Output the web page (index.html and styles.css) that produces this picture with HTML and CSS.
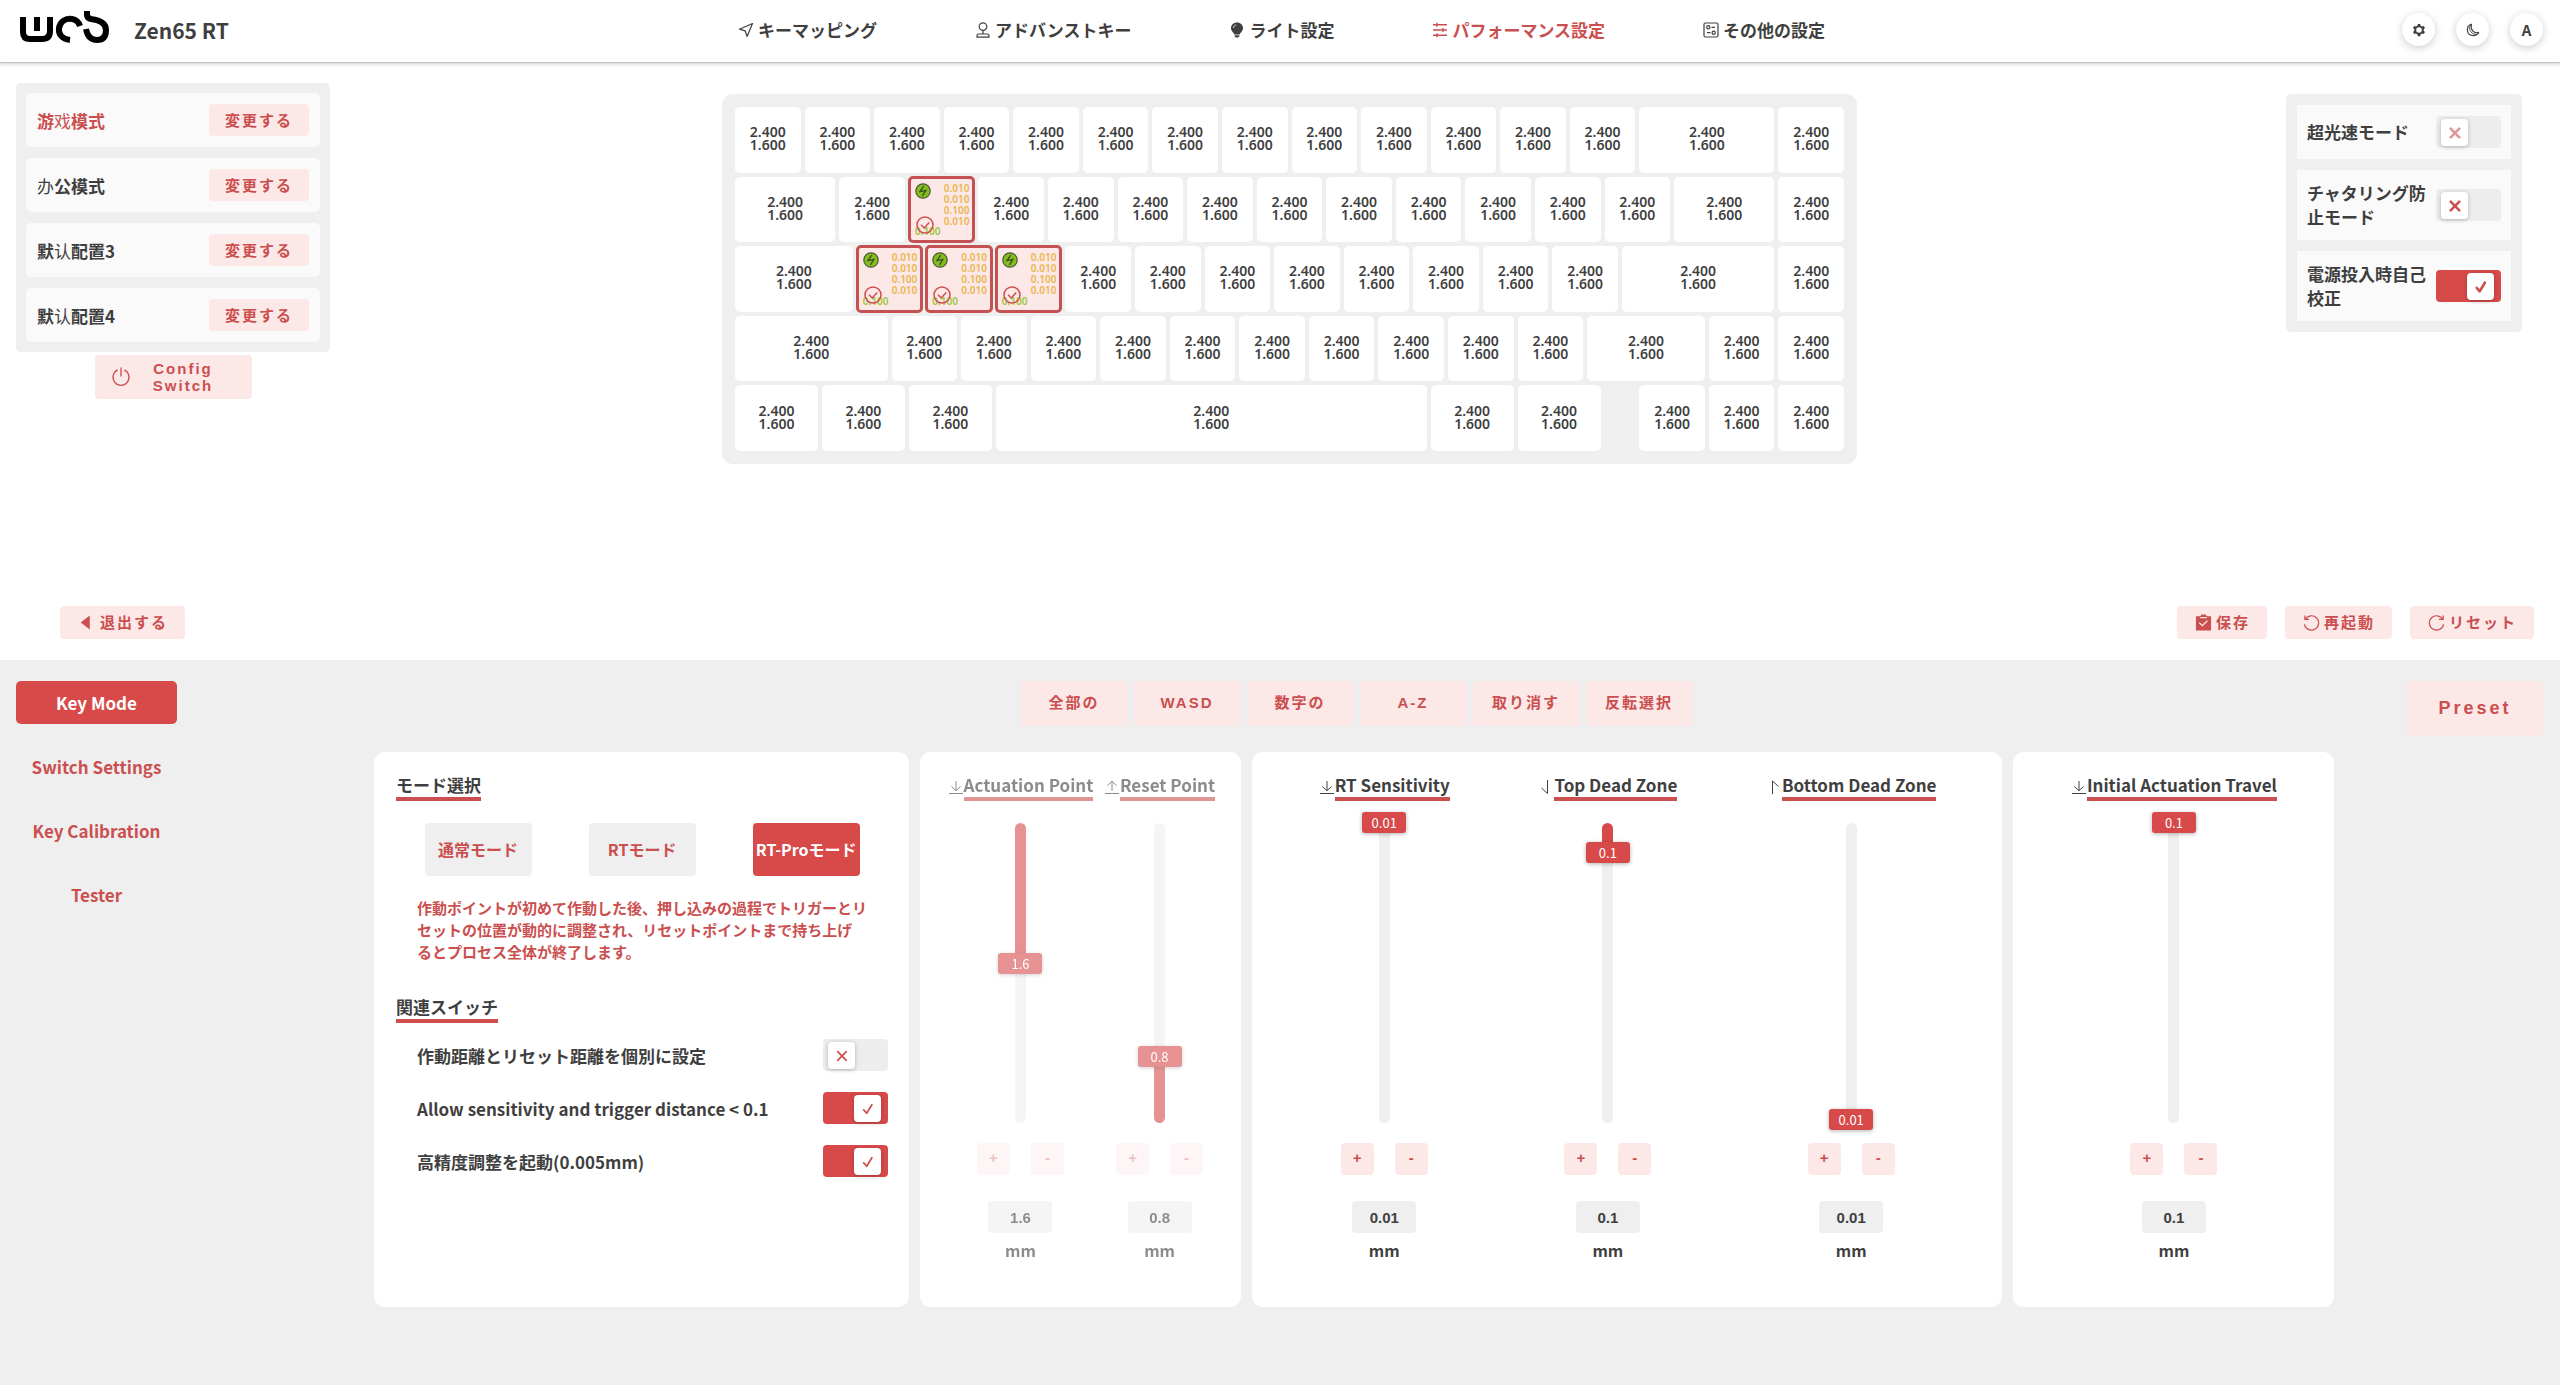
FILE: index.html
```html
<!DOCTYPE html>
<html lang="ja">
<head>
<meta charset="utf-8">
<meta name="viewport" content="width=device-width, initial-scale=1">
<title>Zen65 RT</title>
<link rel="stylesheet" href="styles.css">
</head>
<body>
<svg class="sprite" aria-hidden="true">
  <symbol id="i-location" viewBox="0 0 16 16"><path d="M14.5 1.5 1.5 7.2l5.6 1.6 2 5.7z" fill="none" stroke="currentColor" stroke-width="1.2" stroke-linejoin="round"/></symbol>
  <symbol id="i-stick" viewBox="0 0 16 16"><g fill="none" stroke="currentColor" stroke-width="1.2"><circle cx="8" cy="4.6" r="3.8"/><path d="M8 8.4V12M2 15.2v-1.6q0-1.6 1.6-1.6h8.8q1.6 0 1.6 1.6v1.6z"/></g></symbol>
  <symbol id="i-bulb" viewBox="0 0 16 16"><path d="M8 .5C4.400 .5 2 3 2 6.200c0 2.300 1.500 3.600 2.700 5.100l.5 1.200h5.600l.5-1.200C12.500 9.800 14 8.500 14 6.200 14 3 11.600.5 8 .5zM5.600 13.300h4.800v1L9.300 15.600H6.700l-1.100-1.300z" fill="currentColor"/><path d="M4.500 6c.1-1.700 1.200-2.900 2.800-3.100" fill="none" stroke="#fff" stroke-width=".8"/></symbol>
  <symbol id="i-tune" viewBox="0 0 16 16"><path d="M1 2.800h14M1 8h14M1 13.200h14M5 .8v4M11 6v4M5 11.200v4" fill="none" stroke="currentColor" stroke-width="1.400"/></symbol>
  <symbol id="i-form" viewBox="0 0 16 16"><g fill="none" stroke="currentColor" stroke-width="1.200"><rect x="1" y="1" width="14" height="14" rx="1.500"/><circle cx="5.300" cy="5.300" r="1.600"/><circle cx="10.700" cy="10.700" r="1.600"/><path d="M8.500 5.300H12M4 10.700h3.500"/></g></symbol>
  <symbol id="i-gear" viewBox="0 0 16 16"><path d="M6.700 1h2.600l.6 2 1.600.9 2-.5 1.300 2.300L13.400 7.200v1.600l1.400 1.500-1.300 2.300-2-.5-1.600.9-.6 2H6.700l-.6-2-1.600-.9-2 .5-1.300-2.300L2.600 8.800V7.200L1.200 5.700l1.300-2.300 2 .5L6.100 3zM8 4.800a3.200 3.200 0 1 0 0 6.400 3.200 3.200 0 0 0 0-6.400z" fill="currentColor" fill-rule="evenodd"/></symbol>
  <symbol id="i-moon" viewBox="0 0 16 16"><path d="M6.200 1.400C3 2.500 1.200 5.200 1.600 8.600c.5 3.500 3.300 6 6.800 5.900 2.700-.1 4.900-1.500 6.100-3.700-5.600 1.600-9.800-3.400-8.300-9.400z" fill="none" stroke="currentColor" stroke-width="1.400" stroke-linejoin="round"/><path d="M4.200 4c-.8 4.500 2 8.800 7 8.800" fill="none" stroke="currentColor" stroke-width="1"/></symbol>
  <symbol id="i-power" viewBox="0 0 20 20"><path d="M10 1v8M6.300 3.200a8 8 0 1 0 7.400 0" fill="none" stroke="currentColor" stroke-width="1.300" stroke-linecap="round"/></symbol>
  <symbol id="i-back" viewBox="0 0 16 16"><path d="M12 1.500v13L3.500 8z" fill="currentColor"/></symbol>
  <symbol id="i-save" viewBox="0 0 18 18"><path d="M1 2.500h4V1.800h1.500V.5h5v1.300H13v.7h4V17.500H1z" fill="currentColor"/><path d="M5.500 3.900h7M4.600 9.300l3.200 3 5.300-5.200" fill="none" stroke="#fde8e8" stroke-width="1.300"/></symbol>
  <symbol id="i-undo" viewBox="0 0 18 18"><path d="M2 1.500v4.300h4.300M2.400 5.600a7.600 7.600 0 1 1-.9 5.400" fill="none" stroke="currentColor" stroke-width="1.300"/></symbol>
  <symbol id="i-redo" viewBox="0 0 18 18"><path d="M16 1.500v4.300h-4.300M15.600 5.600a7.600 7.600 0 1 0 .9 5.400" fill="none" stroke="currentColor" stroke-width="1.300"/></symbol>
  <symbol id="i-close" viewBox="0 0 14 14"><path d="m2 2 10 10M12 2 2 12" fill="none" stroke="currentColor" stroke-linecap="round"/></symbol>
  <symbol id="i-check" viewBox="0 0 14 14"><path d="m2 8 3.500 4L11.500 2" fill="none" stroke="currentColor" stroke-linecap="round" stroke-linejoin="round"/></symbol>
  <symbol id="i-down" viewBox="0 0 16 16"><path d="M8 2v9.500M3.500 7.500 8 11.700l4.500-4.200M1 14.500h14" fill="none" stroke="currentColor"/></symbol>
  <symbol id="i-up" viewBox="0 0 16 16"><path d="M8 12V2.300M3.500 6.500 8 2.300l4.500 4.200M1 14.500h14" fill="none" stroke="currentColor"/></symbol>
  <symbol id="i-half-down" viewBox="0 0 16 16"><path d="M9.500 1v13.500L3.500 9" fill="none" stroke="currentColor"/></symbol>
  <symbol id="i-half-up" viewBox="0 0 16 16"><path d="M6.500 15V2l6 5.500" fill="none" stroke="currentColor"/></symbol>
  <symbol id="i-bolt" viewBox="0 0 16 16"><circle cx="8" cy="8" r="7.200" fill="#84bd1c" stroke="#4c5a34" stroke-width="1.200"/><path d="M8.800 3 5 8.600l5.800-1.200L7.400 13" fill="none" stroke="#3c4a2c" stroke-width="1.300"/></symbol>
  <symbol id="i-ok" viewBox="0 0 18 18"><g fill="none" stroke="currentColor" stroke-width="1.500"><circle cx="9" cy="9" r="8"/><path d="m5 8.800 3.200 3.200L13.200 6.500"/></g></symbol>
</svg>

<header class="topbar">
  <div class="brand">
    <svg class="logo" viewBox="0 0 90 32" role="img" aria-label="WOB"><g fill="none" stroke="#000" stroke-width="6"><path d="M3 6v15q0 7 7 7h12q8 0 8-8V6M17 6v14"/><path d="M50 29C42 28 38 23 39 17 40 11 45 7 52 8q6 1 8 7"/><path d="M67 0v4q0 3 4 4 15 2 15 11 0 10-9 10Q68 29 66 18"/></g></svg>
    <span class="product">Zen65 RT</span>
  </div>
  <nav class="mainnav">
    <a href="#"><svg><use href="#i-location"/></svg>キーマッピング</a>
    <a href="#"><svg><use href="#i-stick"/></svg>アドバンストキー</a>
    <a href="#"><svg><use href="#i-bulb"/></svg>ライト設定</a>
    <a href="#" class="current"><svg><use href="#i-tune"/></svg>パフォーマンス設定</a>
    <a href="#"><svg><use href="#i-form"/></svg>その他の設定</a>
  </nav>
  <div class="tools">
    <button class="round" aria-label="設定"><svg><use href="#i-gear"/></svg></button>
    <button class="round" aria-label="テーマ"><svg><use href="#i-moon"/></svg></button>
    <button class="round">A</button>
  </div>
</header>

<main>
  <section class="upper">
    <div class="stage">
      <div class="profiles">
        <ul class="panel">
          <li class="current"><span>游<i>戏</i>模式</span><button class="btn">変更する</button></li>
          <li><span><i>办</i>公模式</span><button class="btn">変更する</button></li>
          <li><span>默<i>认</i>配置3</span><button class="btn">変更する</button></li>
          <li><span>默<i>认</i>配置4</span><button class="btn">変更する</button></li>
        </ul>
        <button class="btn config"><svg><use href="#i-power"/></svg><span>Config Switch</span></button>
      </div>
      <div class="keyboard"><div class="keys" id="keys"></div></div>
      <div class="options">
        <label class="option"><span>超光速モード</span><span class="switch bold"><input type="checkbox" disabled><span class="knob"><svg class="off"><use href="#i-close"/></svg><svg class="on"><use href="#i-check"/></svg></span></span></label>
        <label class="option"><span>チャタリング防止モード</span><span class="switch bold"><input type="checkbox"><span class="knob"><svg class="off"><use href="#i-close"/></svg><svg class="on"><use href="#i-check"/></svg></span></span></label>
        <label class="option"><span>電源投入時自己校正</span><span class="switch bold"><input type="checkbox" checked><span class="knob"><svg class="off"><use href="#i-close"/></svg><svg class="on"><use href="#i-check"/></svg></span></span></label>
      </div>
    </div>
    <div class="actions">
      <button class="btn exit"><svg><use href="#i-back"/></svg>退出する</button>
      <div class="group">
        <button class="btn"><svg><use href="#i-save"/></svg>保存</button>
        <button class="btn"><svg><use href="#i-undo"/></svg>再起動</button>
        <button class="btn"><svg><use href="#i-redo"/></svg>リセット</button>
      </div>
    </div>
  </section>

  <section class="lower">
    <nav class="sidenav">
      <a href="#" class="current">Key Mode</a>
      <a href="#">Switch Settings</a>
      <a href="#">Key Calibration</a>
      <a href="#">Tester</a>
    </nav>

    <div class="work">
      <div class="picker">
        <button class="btn">全部の</button>
        <button class="btn">WASD</button>
        <button class="btn">数字の</button>
        <button class="btn">A-Z</button>
        <button class="btn">取り消す</button>
        <button class="btn">反転選択</button>
      </div>
      <div class="cards">
        <div class="card modes">
          <h2>モード選択</h2>
          <div class="moderow">
            <button>通常モード</button>
            <button>RTモード</button>
            <button class="current">RT-Proモード</button>
          </div>
          <p>作動ポイントが初めて作動した後、押し込みの過程でトリガーとリセットの位置が動的に調整され、リセットポイントまで持ち上げ<br>るとプロセス全体が終了します。</p>
          <h2>関連スイッチ</h2>
          <div class="toggles">
            <label><span>作動距離とリセット距離を個別に設定</span><span class="switch"><input type="checkbox"><span class="knob"><svg class="off"><use href="#i-close"/></svg><svg class="on"><use href="#i-check"/></svg></span></span></label>
            <label><span>Allow sensitivity and trigger distance &lt; 0.1</span><span class="switch"><input type="checkbox" checked><span class="knob"><svg class="off"><use href="#i-close"/></svg><svg class="on"><use href="#i-check"/></svg></span></span></label>
            <label><span>高精度調整を起動(0.005mm)</span><span class="switch"><input type="checkbox" checked><span class="knob"><svg class="off"><use href="#i-close"/></svg><svg class="on"><use href="#i-check"/></svg></span></span></label>
          </div>
        </div>

        <div class="card dials disabled">
          <div class="dial">
            <h2><svg><use href="#i-down"/></svg><span>Actuation Point</span></h2>
            <div class="slider" style="--from:0%;--to:47%;--at:47%"><input type="range" aria-label="Actuation Point" min="0" max="3.4" step="0.1" value="1.6" disabled><output>1.6</output></div>
            <div class="steps"><button disabled>+</button><button disabled>-</button></div>
            <label><input type="text" value="1.6" disabled>mm</label>
          </div>
          <div class="dial">
            <h2><svg><use href="#i-up"/></svg><span>Reset Point</span></h2>
            <div class="slider" style="--from:78%;--to:100%;--at:78%"><input type="range" aria-label="Reset Point" min="0" max="3.4" step="0.1" value="0.8" disabled><output>0.8</output></div>
            <div class="steps"><button disabled>+</button><button disabled>-</button></div>
            <label><input type="text" value="0.8" disabled>mm</label>
          </div>
        </div>

        <div class="card dials">
          <div class="dial">
            <h2><svg><use href="#i-down"/></svg><span>RT Sensitivity</span></h2>
            <div class="slider" style="--from:0%;--to:0%;--at:0%"><input type="range" aria-label="RT Sensitivity" min="0.01" max="2" step="0.01" value="0.01"><output>0.01</output></div>
            <div class="steps"><button>+</button><button>-</button></div>
            <label><input type="text" value="0.01">mm</label>
          </div>
          <div class="dial">
            <h2><svg><use href="#i-half-down"/></svg><span>Top Dead Zone</span></h2>
            <div class="slider" style="--from:0%;--to:10%;--at:10%"><input type="range" aria-label="Top Dead Zone" min="0" max="1" step="0.01" value="0.1"><output>0.1</output></div>
            <div class="steps"><button>+</button><button>-</button></div>
            <label><input type="text" value="0.1">mm</label>
          </div>
          <div class="dial">
            <h2><svg><use href="#i-half-up"/></svg><span>Bottom Dead Zone</span></h2>
            <div class="slider" style="--from:99%;--to:99%;--at:99%"><input type="range" aria-label="Bottom Dead Zone" min="0" max="1" step="0.01" value="0.01"><output>0.01</output></div>
            <div class="steps"><button>+</button><button>-</button></div>
            <label><input type="text" value="0.01">mm</label>
          </div>
        </div>

        <div class="card dials">
          <div class="dial">
            <h2><svg><use href="#i-down"/></svg><span>Initial Actuation Travel</span></h2>
            <div class="slider" style="--from:0%;--to:0%;--at:0%"><input type="range" aria-label="Initial Actuation Travel" min="0.1" max="3.4" step="0.1" value="0.1"><output>0.1</output></div>
            <div class="steps"><button>+</button><button>-</button></div>
            <label><input type="text" value="0.1">mm</label>
          </div>
        </div>
      </div>
    </div>

    <div class="presetbox"><button class="btn preset">Preset</button></div>
  </section>
</main>
<script src="keyboard.js"></script>
</body>
</html>
```
FILE: styles.css
```css
:root {
  --red: #d84a4a;
  --red-text: #cb4f4f;
  --pink: #fde8e8;
  --gray: #efefef;
  --ink: #3f3f3f;
  --ui: "Noto Sans CJK JP", "Noto Sans", sans-serif;
  --control: "Liberation Sans", "Noto Sans CJK JP", sans-serif;
}

* { box-sizing: border-box; }

body {
  margin: 0;
  min-height: 100vh;
  display: flex;
  flex-direction: column;
  background: #fff;
  color: var(--ink);
  font: 700 17px/25px var(--ui);
}

a { color: inherit; text-decoration: none; }
ul { list-style: none; margin: 0; padding: 0; }
h2 { margin: 0; font-size: 17px; line-height: 25px; font-weight: 700; }
button, input { font: inherit; color: inherit; border: 0; }
.sprite { display: none; }

.btn {
  display: flex;
  align-items: center;
  justify-content: center;
  background: var(--pink);
  color: var(--red-text);
  border-radius: 4px;
  font: 700 15px/17px var(--control);
  letter-spacing: 2px;
}

/* header */
.topbar {
  display: grid;
  grid-template-columns: 1fr auto 1fr;
  align-items: center;
  height: 63px;
  padding: 0 17px 3px 20px;
  border-bottom: 1px solid #c2c4c4;
  box-shadow: 0 1px 4px rgba(0, 0, 0, .2);
}
.brand { display: flex; align-items: center; gap: 24px; }
.logo { width: 90px; height: 32px; margin-bottom: 6px; }
.product { font-size: 21px; line-height: 32px; }
.mainnav { display: flex; gap: 98px; }
.mainnav a { display: flex; align-items: center; gap: 4px; }
.mainnav svg { width: 16px; height: 16px; }
.mainnav .current { color: var(--red-text); }
.tools { display: flex; justify-content: flex-end; gap: 21px; }
.round {
  width: 33px;
  height: 33px;
  padding: 0;
  display: grid;
  place-items: center;
  border-radius: 50%;
  background: #fff;
  font-size: 15px;
  box-shadow: 0 2px 8px rgba(0, 0, 0, .2);
}
.round svg { width: 14px; height: 14px; }

main { flex: 1; display: flex; flex-direction: column; }

/* upper half */
.upper {
  min-height: 597px;
  display: flex;
  flex-direction: column;
  justify-content: space-between;
  padding: 20px 0 21px 16px;
}
.stage {
  display: grid;
  grid-template-columns: 706fr 1135fr 703fr;
  align-items: start;
}
.profiles { width: 314px; display: grid; justify-items: center; gap: 3px; }
.panel {
  width: 100%;
  display: grid;
  gap: 11px;
  padding: 10px;
  background: var(--gray);
  border-radius: 5px;
}
.panel li {
  display: flex;
  align-items: center;
  justify-content: space-between;
  padding: 11px;
  background: #fafafa;
  border-radius: 5px;
}
.panel i { font-style: normal; font-weight: 400; }
.panel .current { color: var(--red-text); }
.panel .btn { width: 100px; height: 32px; padding: 0; }
.config { width: 157px; height: 44px; padding: 0 16px; }
.config svg { width: 20px; height: 20px; }
.config span { flex: 1; }

.keyboard {
  margin-top: 11px;
  padding: 11px;
  background: var(--gray);
  border-radius: 11px;
}
.keys {
  display: grid;
  grid-template-columns: repeat(64, 1fr);
  grid-template-rows: repeat(5, 1fr);
  aspect-ratio: 16 / 5;
}
.key {
  min-width: 0;
  min-height: 0;
  margin: 2px;
  padding: 0 0 3px;
  background: #fff;
  border-radius: 5px;
  font: 600 14px/13px "Noto Sans", sans-serif;
}
.key.selected {
  position: relative;
  margin: 1px;
  border: 3px solid #c55252;
  background: var(--pink);
}
.key.selected .values {
  position: absolute;
  top: 4px;
  right: 3px;
  font-size: 10px;
  line-height: 11px;
  color: #e9b74f;
}
.key.selected .travel {
  position: absolute;
  left: 4px;
  bottom: 3px;
  font-size: 10px;
  line-height: 11px;
  color: #9cc63c;
}
.key.selected svg { position: absolute; }
.key.selected .bolt { left: 4px; top: 4px; width: 16px; height: 16px; }
.key.selected .ok { left: 5px; bottom: 6px; width: 18px; height: 18px; color: #cf4d4d; }

.options {
  justify-self: end;
  width: 236px;
  margin: 11px 38px 0 0;
  display: grid;
  gap: 11px;
  padding: 11px;
  background: var(--gray);
  border-radius: 5px;
}
.option {
  display: flex;
  align-items: center;
  justify-content: space-between;
  padding: 11px 10px;
  background: #fafafa;
  line-height: 24px;
}

/* switches */
.switch { position: relative; flex: none; width: 65px; height: 32px; }
.switch input {
  appearance: none;
  display: block;
  width: 100%;
  height: 100%;
  margin: 0;
  border-radius: 4px;
  background: #ededed;
}
.switch input:checked { background: var(--red); }
.knob {
  position: absolute;
  left: 5px;
  top: 3px;
  width: 27px;
  height: 27px;
  display: grid;
  place-items: center;
  border-radius: 4px;
  background: #fff;
  color: var(--red-text);
  box-shadow: 0 1px 4px rgba(0, 0, 0, .25);
  pointer-events: none;
}
.knob svg { width: 12px; height: 12px; stroke-width: 2; }
.bold svg { stroke-width: 3; }
.knob .on, input:checked + .knob .off { display: none; }
input:checked + .knob .on { display: block; }
input:checked + .knob { left: 31px; }
input:disabled + .knob svg { opacity: .6; }

.actions { display: flex; justify-content: space-between; padding: 0 26px 0 44px; }
.actions .group { display: flex; gap: 18px; }
.actions .btn { height: 33px; padding: 0 17px 0 18px; gap: 4px; }
.actions svg { width: 17px; height: 17px; }
.actions .exit { padding: 0 17px; gap: 6px; }

/* lower half */
.lower {
  flex: 1;
  display: grid;
  grid-template-columns: 374px 1fr 226px;
  align-items: start;
  padding: 21px 0;
  background: var(--gray);
}
.sidenav { width: 177px; padding-left: 16px; display: grid; gap: 21px; }
.sidenav a {
  padding: 9px 0;
  border-radius: 5px;
  text-align: center;
  color: var(--red-text);
}
.sidenav .current { background: var(--red); color: #fff; }

.work { display: grid; gap: 26px; }
.picker { display: flex; justify-content: center; gap: 6px; padding-left: 5px; }
.picker .btn { width: 107px; height: 45px; padding: 0 0 2px; }
.presetbox { display: grid; justify-content: end; padding-right: 17px; }
.preset { width: 136px; height: 55px; font-size: 18px; letter-spacing: 3px; }

.cards {
  display: grid;
  grid-template-columns: 5fr 3fr 7fr 3fr;
  gap: 11px;
  min-height: 555px;
}
.card { min-width: 0; padding: 20px 21px 20px 22px; background: #fff; border-radius: 11px; }
h2 span, .modes h2 { border-bottom: 4px solid var(--red-text); }
.modes h2 { width: max-content; }
.moderow { display: flex; justify-content: space-around; margin: 22px 0 21px; }
.moderow button {
  width: 107px;
  height: 53px;
  padding: 0;
  border-radius: 4px;
  background: var(--gray);
  color: var(--red-text);
  font-size: 16px;
  white-space: nowrap;
}
.moderow .current { background: var(--red); color: #fff; }
.modes p {
  margin: 0 20px 31px 21px;
  font-size: 15px;
  line-height: 22px;
  color: var(--red-text);
}
.toggles { display: grid; gap: 21px; margin-top: 16px; padding-left: 21px; }
.toggles label { display: flex; align-items: center; justify-content: space-between; }

/* dials */
.dials { display: flex; justify-content: space-around; }
.disabled .dial { opacity: .6; }
.dial { display: flex; flex-direction: column; align-items: center; }
.dial h2 { display: flex; align-items: center; white-space: nowrap; }
.dial h2 svg { width: 16px; height: 16px; }
.slider { position: relative; width: 44px; height: 300px; margin: 22px 0 20px; }
.slider input {
  appearance: none;
  writing-mode: vertical-lr;
  display: block;
  width: 11px;
  height: 100%;
  margin: 0 auto;
  border-radius: 6px;
  background: linear-gradient(#efefef var(--from), var(--red) var(--from) var(--to), #efefef var(--to));
}
.slider input::-webkit-slider-thumb { appearance: none; width: 1px; height: 1px; }
.slider output {
  position: absolute;
  left: 0;
  top: calc(var(--at) - 11px);
  width: 44px;
  height: 21px;
  border-radius: 3px;
  background: var(--red);
  color: #fff;
  font-size: 13px;
  font-weight: 400;
  line-height: 22px;
  text-align: center;
  box-shadow: 0 1px 4px rgba(0, 0, 0, .3);
  pointer-events: none;
}
.steps { display: flex; gap: 21px; }
.steps button {
  width: 33px;
  height: 32px;
  padding: 0 0 3px;
  border-radius: 4px;
  background: var(--pink);
  color: var(--red-text);
  font: 700 15px/17px var(--control);
}
.disabled .steps button { opacity: .6; }
.dial label {
  display: grid;
  justify-items: center;
  gap: 5px;
  margin-top: 26px;
  font-size: 16px;
  line-height: 24px;
}
.dial label input {
  width: 64px;
  height: 32px;
  padding: 0;
  border-radius: 4px;
  background: var(--gray);
  font: 700 15px/17px var(--control);
  text-align: center;
}
```
FILE: keyboard.js
```js
// Key widths in key units, row by row. A negative number is an empty space.
const ones = n => Array(n).fill(1);
const rows = [
  [...ones(13), 2, 1],
  [1.5, ...ones(12), 1.5, 1],
  [1.75, ...ones(11), 2.25, 1],
  [2.25, ...ones(10), 1.75, 1, 1],
  [1.25, 1.25, 1.25, 6.25, 1.25, 1.25, -0.5, 1, 1, 1]
];
const selected = new Set(["1-2", "2-1", "2-2", "2-3"]);
const board = document.getElementById("keys");

rows.forEach((row, r) => row.forEach((units, k) => {
  const key = document.createElement(units < 0 ? "span" : "button");
  key.style.gridColumn = `span ${Math.abs(units) * 4}`;
  if (units > 0) {
    key.className = "key";
    key.innerHTML = "2.400<br>1.600";
  }
  if (selected.has(`${r}-${k}`)) {
    key.classList.add("selected");
    key.innerHTML =
      '<svg class="bolt"><use href="#i-bolt"/></svg>' +
      '<span class="values">0.010<br>0.010<br>0.100<br>0.010</span>' +
      '<span class="travel">0.100</span>' +
      '<svg class="ok"><use href="#i-ok"/></svg>';
  }
  board.append(key);
}));
```
